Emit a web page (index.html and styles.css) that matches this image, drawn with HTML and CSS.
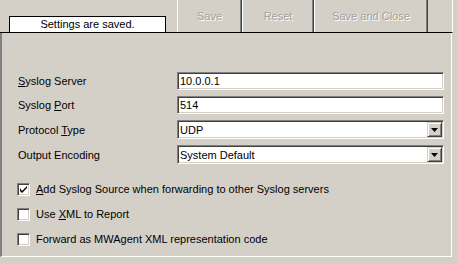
FILE: index.html
```html
<!DOCTYPE html>
<html>
<head>
<meta charset="utf-8">
<link rel="stylesheet" href="styles.css">
</head>
<body>
<div class="window">
  <div class="toolbar">
    <div class="status">Settings are saved.</div>
    <div class="buttons">
      <div class="btn btn-save"><span>Save</span></div>
      <div class="btn btn-reset"><span>Reset</span></div>
      <div class="btn btn-close"><span>Save and Close</span></div>
    </div>
  </div>
  <div class="panel">
    <div class="form">
      <div class="row">
        <div class="label"><u>S</u>yslog Server</div>
        <div class="field input">10.0.0.1</div>
      </div>
      <div class="row">
        <div class="label">Syslog <u>P</u>ort</div>
        <div class="field input">514</div>
      </div>
      <div class="row">
        <div class="label">Protocol <u>T</u>ype</div>
        <div class="field select"><span class="val">UDP</span><span class="arrow"><svg width="7" height="4" viewBox="0 0 7 4"><path d="M0 0H7L3.5 4Z" fill="#000"/></svg></span></div>
      </div>
      <div class="row">
        <div class="label">Output Encoding</div>
        <div class="field select"><span class="val">System Default</span><span class="arrow"><svg width="7" height="4" viewBox="0 0 7 4"><path d="M0 0H7L3.5 4Z" fill="#000"/></svg></span></div>
      </div>
    </div>
    <div class="checks">
      <div class="check">
        <span class="box"><svg width="7" height="7" viewBox="0 0 7 7"><path d="M0 2V5L2 7L7 2V-0L2 5Z" fill="#000"/></svg></span>
        <span class="ctext"><u>A</u>dd Syslog Source when forwarding to other Syslog servers</span>
      </div>
      <div class="check">
        <span class="box"></span>
        <span class="ctext">Use <u>X</u>ML to Report</span>
      </div>
      <div class="check">
        <span class="box"></span>
        <span class="ctext">Forward as MWAgent XML representation code</span>
      </div>
    </div>
  </div>
</div>
</body>
</html>
```
FILE: styles.css
```css
html, body {
  margin: 0;
  padding: 0;
  background: #d4d0c8;
}
body {
  font-family: "Liberation Sans", Arial, sans-serif;
  font-size: 11px;
  color: #000;
  width: 457px;
  height: 264px;
  overflow: hidden;
}
.window {
  width: 457px;
  height: 264px;
}
.toolbar {
  display: flex;
  align-items: flex-end;
  height: 32px;
  width: 452px;
  border-bottom: 1px solid #000;
  border-right: 1px solid #fff;
  box-sizing: content-box;
}
.status {
  margin-left: 9px;
  width: 155px;
  background: #fff;
  border: 1px solid #000;
  border-bottom: none;
  text-align: center;
  line-height: 15px;
  font-size: 11px;
  height: 15px;
}
.buttons {
  display: flex;
  margin-left: 11px;
  height: 32px;
}
.btn {
  height: 32px;
  box-sizing: border-box;
  display: flex;
  align-items: center;
  justify-content: center;
  border-left: 1px solid #fff;
  border-right: 1px solid #404040;
  box-shadow: inset -1px 0 #808080;
  color: #a0a0a0;
  text-shadow: 1px 1px 0 #fff;
  padding-bottom: 1px;
}
.btn-save { width: 65px; }
.btn-reset { width: 72px; }
.btn-close { width: 114px; }
.panel {
  width: 452px;
  height: 224px;
  box-sizing: border-box;
  border-left: 2px solid #808080;
  border-right: 1px solid #fff;
  border-bottom: 1px solid #fff;
  padding-left: 15px;
  padding-top: 39px;
}
.form {
  display: flex;
  flex-direction: column;
  gap: 6px;
}
.row {
  display: flex;
  align-items: center;
  height: 18px;
}
.row:nth-child(n+3) {
  height: 19px;
}
.label {
  width: 159px;
  padding-left: 1px;
}
.field {
  width: 267px;
  height: 100%;
  box-sizing: border-box;
  background: #fff;
  border-top: 1px solid #808080;
  border-left: 1px solid #808080;
  border-right: 1px solid #fff;
  border-bottom: 1px solid #fff;
  box-shadow: inset 1px 1px 0 #404040, inset -1px -1px 0 #d4d0c8;
  display: flex;
  align-items: center;
  padding-left: 2px;
  line-height: 14px;
}
.select .val {
  flex: 1;
}
.arrow {
  width: 15px;
  height: 15px;
  margin-right: 1px;
  box-sizing: border-box;
  background: #d4d0c8;
  border-top: 1px solid #d4d0c8;
  border-left: 1px solid #d4d0c8;
  border-right: 1px solid #404040;
  border-bottom: 1px solid #404040;
  box-shadow: inset 1px 1px 0 #fff, inset -1px -1px 0 #808080;
  display: flex;
  align-items: center;
  justify-content: center;
}
.arrow svg { display: block; margin-top: 1px; }
.checks {
  display: flex;
  flex-direction: column;
  gap: 12px;
  margin-top: 19px;
}
.check {
  display: flex;
  align-items: center;
  height: 13px;
  gap: 6px;
  overflow: visible;
}
.ctext {
  line-height: 13px;
  height: 13px;
}
.box {
  flex: none;
  width: 13px;
  height: 13px;
  box-sizing: border-box;
  background: #fff;
  border-top: 1px solid #808080;
  border-left: 1px solid #808080;
  border-right: 1px solid #fff;
  border-bottom: 1px solid #fff;
  box-shadow: inset 1px 1px 0 #404040, inset -1px -1px 0 #d4d0c8;
  display: flex;
  align-items: center;
  justify-content: center;
}
.box svg { display: block; }
u { text-decoration: underline; text-underline-offset: 1px; }
```
